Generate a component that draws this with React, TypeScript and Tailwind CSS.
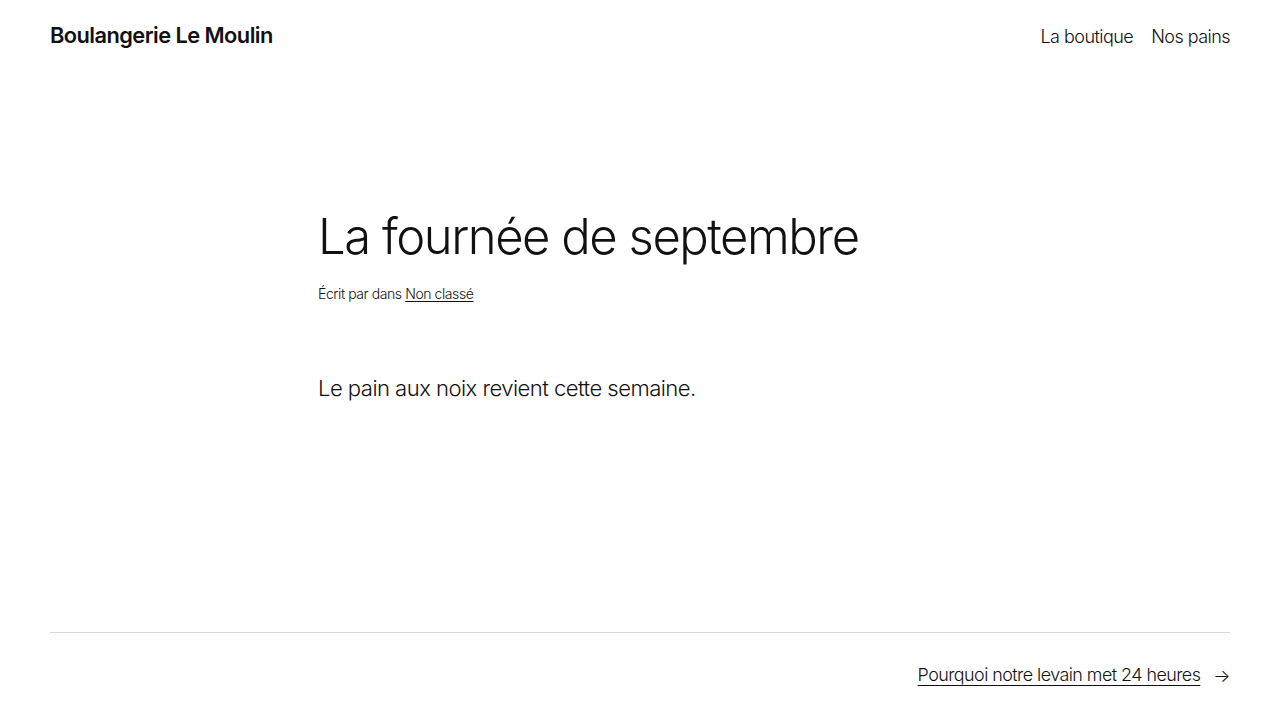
export default function App() {
    return (
        <div className="min-h-[713px] bg-white text-[#111111] flex flex-col" style={{ fontFamily: 'Inter, "Noto Sans", sans-serif' }}>
            <header className="flex items-center justify-between px-[50px] h-[70px]">
                <a className="text-[21.8px] font-semibold tracking-[-0.025em]">Boulangerie Le Moulin</a>
                <nav className="flex items-center gap-[18px] pt-[2px] text-[18px] font-light tracking-[-0.03em]">
                    <a>La boutique</a>
                    <a>Nos pains</a>
                </nav>
            </header>

            <main className="w-[644px] mx-auto pt-[140px] flex-1">
                <h1 className="text-[49px] font-light leading-[1.1] tracking-[-0.03em]">La fournée de septembre</h1>
                <p className="mt-[19px] text-[14px] font-light tracking-[-0.03em]">
                    Écrit par dans <a className="underline underline-offset-2">Non classé</a>
                </p>
                <p className="mt-[68px] text-[22.1px] font-light tracking-[-0.025em]">Le pain aux noix revient cette semaine.</p>
            </main>

            <footer className="px-[50px] pb-[24px]">
                <div className="border-t border-[#d9d9d9]" />
                <div className="flex justify-end items-center gap-[13px] pt-[29px] text-[17.9px] font-light tracking-[-0.03em]">
                    <a className="underline underline-offset-4">Pourquoi notre levain met 24 heures</a>
                    <span className="text-[18px]">→</span>
                </div>
            </footer>
        </div>
    );
}
